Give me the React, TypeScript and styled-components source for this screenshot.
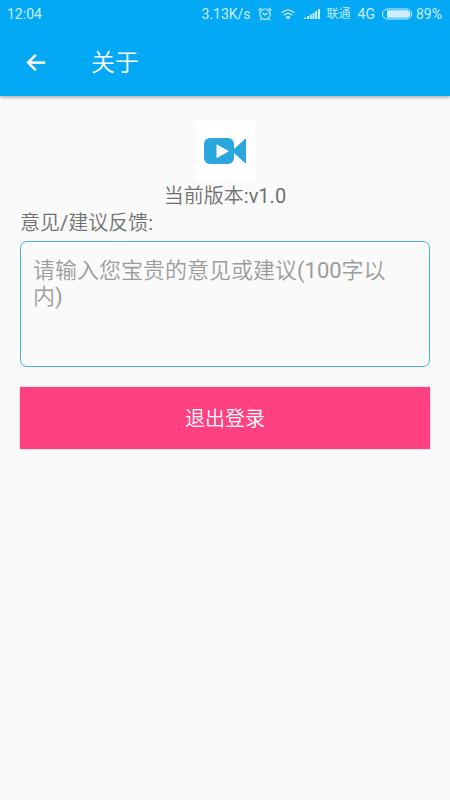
import React from "react";
import styled, { createGlobalStyle } from "styled-components";

const GlobalStyle = createGlobalStyle`
  * { box-sizing: border-box; }
  body {
    margin: 0;
    background: #fafafa;
    font-family: Roboto, "Noto Sans CJK SC DemiLight", "Noto Sans CJK SC", sans-serif;
    font-weight: 400;
    color: #707070;
  }
`;

const Header = styled.header`
  background: #03a9f4;
  color: #fff;
  box-shadow: 0 1px 4px rgba(0, 0, 0, 0.4);
`;

const StatusBar = styled.div`
  display: flex;
  align-items: center;
  justify-content: space-between;
  height: 28px;
  padding: 0 8px 0 7px;
  font-size: 14px;
  line-height: 20px;
  color: #cdeefd;
`;

const StatusGroup = styled.div`
  display: flex;
  align-items: center;
  gap: 7px;
`;

const StatusIcons = styled.span`
  display: flex;
  align-items: center;
  gap: 9px;
`;

const Carrier = styled.span`
  font-size: 12px;
`;

const Battery = styled.span`
  display: flex;
  align-items: center;
  gap: 4px;
`;

const Toolbar = styled.div`
  display: flex;
  align-items: center;
  gap: 42px;
  height: 68px;
  padding: 0 22px;
`;

const BackButton = styled.button`
  display: flex;
  padding: 0;
  border: 0;
  background: none;
  color: inherit;
`;

const Title = styled.h1`
  margin: 0;
  padding-top: 2px;
  font-size: 24px;
  line-height: 32px;
  font-weight: 400;
`;

const Content = styled.main`
  display: flex;
  flex-direction: column;
  padding: 25px 20px;
`;

const Logo = styled.div`
  display: flex;
  align-items: center;
  justify-content: center;
  align-self: center;
  width: 60px;
  height: 60px;
  background: #fff;
`;

const Version = styled.p`
  margin: 0;
  padding-top: 2px;
  text-align: center;
  font-size: 20px;
  line-height: 27px;
`;

const FieldLabel = styled.label`
  font-size: 20px;
  line-height: 27px;
`;

const Feedback = styled.textarea`
  display: block;
  width: 100%;
  height: 126px;
  margin-top: 4px;
  padding: 16px 16px 12px 12px;
  border: 1px solid #42b0d9;
  border-radius: 7px;
  background: transparent;
  color: #707070;
  font-family: inherit;
  font-size: 22px;
  line-height: 26px;
  resize: none;

  &::placeholder {
    color: #9c9c9c;
    opacity: 1;
  }
`;

const LogoutButton = styled.button`
  width: 100%;
  height: 62px;
  margin-top: 20px;
  padding: 2px 0 0;
  border: 0;
  background: #ff4081;
  box-shadow: 0 0 2px rgba(0, 0, 0, 0.25);
  color: #fff;
  font-family: inherit;
  font-size: 20px;
  line-height: 28px;
`;

const AlarmIcon = () => (
  <svg width="14" height="14" viewBox="0 0 14 14" fill="none" stroke="currentColor" strokeWidth="1.2" strokeLinecap="round" aria-hidden="true">
    <circle cx="7" cy="7.2" r="5.2" />
    <path d="M4.8 6.2 7 8l2.200-1.800M.8 3.200 3 1.200M13.200 3.200 11 1.200M3.200 11.800l-1 1M10.800 11.800l1 1" />
  </svg>
);

const WifiIcon = () => (
  <svg width="14" height="11" viewBox="0 0 14 11" fill="none" stroke="currentColor" strokeWidth="1.3" aria-hidden="true">
    <path d="M.7 3.8C4.300.3 9.700.3 13.300 3.800M2.800 6.100c2.400-2.300 6-2.300 8.400 0" />
    <path d="M4.500 7.900c1.500-1.300 3.500-1.300 5 0L7 10.600z" fill="currentColor" stroke="none" />
  </svg>
);

const SignalIcon = () => (
  <svg width="16" height="10" viewBox="0 0 16 10" fill="currentColor" aria-hidden="true">
    <path d="M0 8.500h2V10H0zM3 7h2v3H3zM5.800 5.500h2V10h-2zM8.500 4h2v6h-2zM11.200 2h2v8h-2zM14 0h2v10h-2z" />
  </svg>
);

const BatteryIcon = () => (
  <svg width="30" height="12" viewBox="0 0 30 12" aria-hidden="true">
    <rect x="0.500" y="1" width="29" height="10" rx="5" fill="none" stroke="currentColor" />
    <path d="M5 2.300H24.500a3.700 3.700 0 0 1 0 7.400H5z" fill="currentColor" />
  </svg>
);

const BackIcon = () => (
  <svg width="27" height="27" viewBox="0 0 24 24" fill="currentColor" stroke="currentColor" strokeWidth="0.3" aria-hidden="true">
    <path d="M20.500 11H7.830l5.090-5.090L11.500 4.500 4 12l7.500 7.500 1.420-1.410L7.830 13H20.500z" />
  </svg>
);

const CameraIcon = () => (
  <svg width="42" height="28" viewBox="0 0 42 28" role="img" aria-label="视频">
    <rect x="0" y="1" width="30" height="26" rx="6" fill="#2ba7df" />
    <path d="M29 13 41 2q1-1 1 .5v23q0 1.500-1 .5L29 15z" fill="#2ba7df" />
    <path d="M12.500 8.200v12q0 1 .9.500l10.700-6q.9-.5 0-1L13.400 7.700q-.9-.5-.9.500z" fill="#fff" />
  </svg>
);

export default function App() {
  return (
    <>
      <GlobalStyle />
      <Header>
        <StatusBar>
          <span>12:04</span>
          <StatusGroup>
            <span>3.13K/s</span>
            <StatusIcons>
              <AlarmIcon />
              <WifiIcon />
              <SignalIcon />
            </StatusIcons>
            <Carrier>联通</Carrier>
            <span>4G</span>
            <Battery>
              <BatteryIcon />
              89%
            </Battery>
          </StatusGroup>
        </StatusBar>
        <Toolbar>
          <BackButton type="button" aria-label="返回">
            <BackIcon />
          </BackButton>
          <Title>关于</Title>
        </Toolbar>
      </Header>
      <Content>
        <Logo>
          <CameraIcon />
        </Logo>
        <Version>当前版本:v1.0</Version>
        <FieldLabel htmlFor="feedback">意见/建议反馈:</FieldLabel>
        <Feedback id="feedback" maxLength={100} placeholder="请输入您宝贵的意见或建议(100字以内)" />
        <LogoutButton type="button">退出登录</LogoutButton>
      </Content>
    </>
  );
}
